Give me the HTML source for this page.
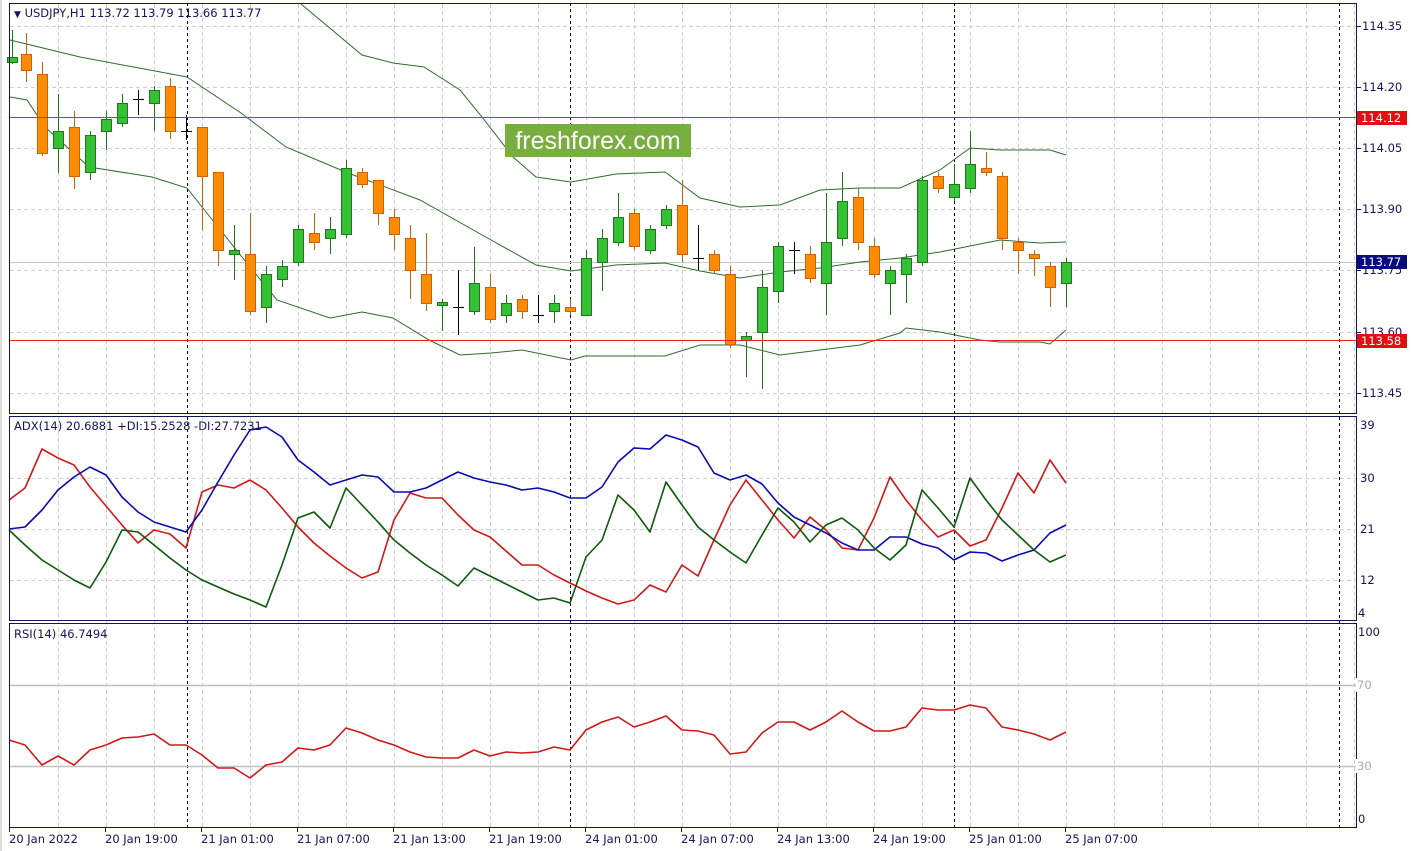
<!DOCTYPE html>
<html><head><meta charset="utf-8"><style>
html,body{margin:0;padding:0;background:#fff;width:1415px;height:851px;overflow:hidden}
svg{display:block}
text{font-family:"DejaVu Sans","Liberation Sans",sans-serif;font-size:11.5px;fill:#14145a}
</style></head><body>
<svg id="s" width="1415" height="851" viewBox="0 0 1415 851">
<rect x="0" y="0" width="1415" height="851" fill="#fff"/>
<g id="grid" stroke="#d0d0d0" stroke-dasharray="4,3" stroke-width="1"></g>
<g stroke="#000" stroke-dasharray="3,3" stroke-width="1">
<line x1="187.5" y1="3" x2="187.5" y2="827"/><line x1="570.5" y1="3" x2="570.5" y2="827"/>
<line x1="954.5" y1="3" x2="954.5" y2="827"/><line x1="1339.5" y1="3" x2="1339.5" y2="827"/>
</g>
<line x1="9" y1="262.5" x2="1356" y2="262.5" stroke="#c8c8c8"/>
<line x1="9" y1="685.5" x2="1356" y2="685.5" stroke="#c0c0c0" stroke-width="1.5"/>
<line x1="9" y1="766.5" x2="1356" y2="766.5" stroke="#c0c0c0" stroke-width="1.5"/>
<g fill="none" stroke="#2e6b2e" stroke-width="1">
<polyline points="301,4 362,55 393,63 424,67 460,90 482,117 513,157 536,177 571,182 616,174 665,172 700,198 740,207 780,205 820,190 860,188 900,188 940,170 970,148 1000,150 1050,150 1066,155"/>
<polyline points="10,40 80,57 187,77 241,113 286,147 348,173 420,200 491,240 536,265 571,271 616,265 665,263 700,271 740,278 780,272 820,268 860,262 900,258 940,252 980,244 1000,240 1040,243 1066,242"/>
<polyline points="10,97 27,100 45,127 89,167 152,177 187,188 210,217 250,267 277,300 330,318 362,312 393,318 429,340 460,355 491,353 522,350 571,360 585,356 665,356 700,345 740,345 780,355 820,350 860,345 900,333 906,328 940,332 980,340 1000,342 1040,342 1050,344 1066,330"/>
</g>
<g id="candles"></g>
<rect x="10" y="117" width="1346" height="1" fill="#ff2020"/>
<rect x="10" y="340" width="1346" height="1" fill="#e82020"/>
<rect x="505" y="124" width="186" height="33" fill="#78ae3e"/>
<text x="598" y="149" text-anchor="middle" style="font-family:'Liberation Sans',sans-serif;font-size:25px;fill:#fff">freshforex.com</text>
<g fill="none" stroke-width="1.6" stroke-linejoin="round">
<polyline stroke="#d01818" points="9,500 25,488 42,449 58,458 74,465 90,487 106,506 122,525 138,543 154,530 170,534 186,548 202,492 218,485 234,488 250,480 266,490 282,508 298,527 314,543 330,556 346,568 362,578 378,572 394,520 410,493 426,498 442,498 458,515 474,530 490,537 506,551 522,565 538,565 554,575 570,583 586,591 602,598 618,604 634,600 650,585 666,592 682,565 698,576 714,540 730,505 746,480 762,500 778,520 794,538 810,517 826,530 842,548 858,550 874,518 890,477 906,500 922,520 938,537 954,530 970,546 986,540 1002,508 1018,473 1034,493 1050,460 1066,483"/>
<polyline stroke="#0a0ab0" points="9,529 25,527 42,510 58,490 74,477 90,467 106,475 122,497 138,512 154,522 170,527 186,532 202,510 218,482 234,455 250,430 266,427 282,437 298,460 314,472 330,485 346,480 362,475 378,477 394,492 410,492 426,488 442,480 458,472 474,478 490,482 506,485 522,490 538,488 554,492 570,498 586,498 602,487 618,462 634,448 650,449 666,435 682,440 698,447 714,473 730,480 746,475 762,484 778,503 794,517 810,525 826,533 842,543 858,550 874,550 890,537 906,537 922,544 938,548 954,560 970,552 986,553 1002,561 1018,555 1034,550 1050,533 1066,525"/>
<polyline stroke="#0c5a0c" points="9,530 25,545 42,560 58,570 74,580 90,588 106,562 122,530 138,532 154,545 170,558 186,570 202,580 218,587 234,594 250,600 266,607 282,565 298,518 314,512 330,528 346,488 362,505 378,522 394,540 410,553 426,565 442,575 458,586 474,568 490,576 506,584 522,592 538,600 554,598 570,603 586,557 602,540 618,495 634,510 650,532 666,482 682,505 698,527 714,540 730,552 746,563 762,535 778,508 794,522 810,542 826,525 842,518 858,530 874,548 890,560 906,545 922,490 938,508 954,527 970,478 986,500 1002,520 1018,535 1034,550 1050,562 1066,555"/>
<polyline stroke="#d01818" points="9,740 25,745 42,765 58,756 74,765 90,750 106,745 122,738 138,737 154,734 170,745 186,745 202,755 218,768 234,768 250,778 266,765 282,762 298,748 314,750 330,745 346,728 362,733 378,740 394,745 410,752 426,757 442,758 458,758 474,750 490,756 506,752 522,753 538,752 554,747 570,750 586,730 602,722 618,717 634,727 650,722 666,716 682,730 698,731 714,735 730,754 746,752 762,733 778,722 794,722 810,730 826,722 842,711 858,722 874,731 890,731 906,727 922,708 938,710 954,710 970,705 986,708 1002,727 1018,730 1034,734 1050,740 1066,732"/>
</g>
<g fill="none" stroke="#14145a" stroke-width="1">
<rect x="9.5" y="3.5" width="1347" height="410"/>
<rect x="9.5" y="416.5" width="1347" height="204"/>
<rect x="9.5" y="623.5" width="1347" height="204"/>
</g>
<line x1="1" y1="0" x2="1" y2="851" stroke="#bbb"/>
<g id="ticks" stroke="#14145a"></g>
<text x="14" y="17"><tspan style="font-size:9px">▼</tspan> USDJPY,H1  113.72 113.79 113.66 113.77</text>
<text x="14" y="430">ADX(14) 20.6881 +DI:15.2528 -DI:27.7231</text>
<text x="14" y="638">RSI(14) 46.7494</text>
<g>
<text x="1362" y="30">114.35</text><text x="1362" y="91">114.20</text><text x="1362" y="152">114.05</text>
<text x="1362" y="213">113.90</text><text x="1362" y="274">113.75</text><text x="1362" y="336">113.60</text><text x="1362" y="397">113.45</text>
</g>
<rect x="1357" y="111" width="50" height="14" fill="#e01010"/><text x="1361" y="122" style="fill:#fff">114.12</text>
<rect x="1357" y="255" width="50" height="14" fill="#0a0a80"/><text x="1361" y="266" style="fill:#fff">113.77</text>
<rect x="1357" y="334" width="50" height="14" fill="#e01010"/><text x="1361" y="345" style="fill:#fff">113.58</text>
<text x="1360" y="429">39</text><text x="1360" y="482">30</text><text x="1360" y="533">21</text><text x="1360" y="584">12</text><text x="1358" y="617">4</text>
<text x="1358" y="636">100</text><text x="1358" y="823">0</text>
<rect x="1356" y="678" width="18" height="14" fill="#fff"/><text x="1357" y="689" style="fill:#aaa">70</text>
<rect x="1356" y="759" width="18" height="14" fill="#fff"/><text x="1357" y="770" style="fill:#aaa">30</text>
<g>
<text x="9" y="843">20 Jan 2022</text><text x="105" y="843">20 Jan 19:00</text><text x="201" y="843">21 Jan 01:00</text>
<text x="297" y="843">21 Jan 07:00</text><text x="393" y="843">21 Jan 13:00</text><text x="489" y="843">21 Jan 19:00</text>
<text x="585" y="843">24 Jan 01:00</text><text x="681" y="843">24 Jan 07:00</text><text x="777" y="843">24 Jan 13:00</text>
<text x="873" y="843">24 Jan 19:00</text><text x="969" y="843">25 Jan 01:00</text><text x="1065" y="843">25 Jan 07:00</text>
</g>
</svg>
<script>
var NS="http://www.w3.org/2000/svg";
function el(p,t,a){var e=document.createElementNS(NS,t);for(var k in a)e.setAttribute(k,a[k]);p.appendChild(e);return e;}
var g=document.getElementById("grid");
[26,87,148,209,270,332,393,478,529,580].forEach(function(y){el(g,"line",{x1:10,x2:1356,y1:y+.5,y2:y+.5});});
for(var x=58;x<1356;x+=48){el(g,"line",{x1:x+.5,x2:x+.5,y1:4,y2:827});}
var t=document.getElementById("ticks");
for(var x=9;x<=1070;x+=96){el(t,"line",{x1:x+.5,x2:x+.5,y1:827,y2:832});}
[26,87,148,209,270,332,393].forEach(function(y){el(t,"line",{x1:1356,x2:1361,y1:y+.5,y2:y+.5});});
var C=[[12,62,57,30,64],[26,54,70,33,82],[42,74,153,62,156],[58,148,131,94,173],[74,127,176,111,189],[90,172,135,131,180],[106,131,119,111,150],[122,123,103,94,127],[138,99,99,90,115],[154,103,90,86,131],[170,86,131,78,139],[186,131,131,115,140],[202,127,176,127,230],[218,172,250,172,266],[234,254,250,225,280],[250,254,311,213,315],[266,307,274,266,323],[282,279,266,260,287],[298,262,229,225,266],[314,233,242,213,250],[330,238,229,217,254],[346,234,168,160,238],[362,172,184,168,188],[378,180,213,180,225],[394,217,234,209,250],[410,238,270,225,299],[426,274,303,233,311],[442,305,302,299,331],[458,307,307,270,335],[474,311,283,247,315],[490,287,319,274,323],[506,315,303,295,323],[522,299,311,295,319],[538,315,315,295,323],[554,311,303,295,323],[570,307,311,299,315],[586,315,258,250,315],[602,262,238,229,291],[618,242,217,193,246],[634,213,246,209,250],[650,250,229,225,254],[666,225,209,205,229],[682,205,254,180,262],[698,258,258,225,270],[714,254,270,250,274],[730,274,344,266,348],[746,340,336,332,377],[762,332,287,270,389],[778,291,246,242,303],[794,250,250,242,274],[810,254,278,246,283],[826,283,242,193,315],[842,238,201,172,246],[858,197,242,188,250],[874,246,274,238,278],[890,283,270,266,315],[906,274,258,254,303],[922,262,180,176,266],[938,176,188,172,193],[954,197,184,164,201],[970,188,164,131,193],[986,168,172,152,176],[1002,176,238,172,250],[1018,242,250,238,274],[1034,254,258,250,276],[1050,266,287,262,307],[1066,283,262,258,307]];
var cg=document.getElementById("candles");
C.forEach(function(c){var x=c[0],o=c[1],cl=c[2],h=c[3],l=c[4];
 if(o==cl){el(cg,"line",{x1:x+.5,x2:x+.5,y1:h,y2:l,stroke:"#000"});el(cg,"line",{x1:x-5,x2:x+6,y1:o+.5,y2:o+.5,stroke:"#000"});return;}
 var up=cl<o,col=up?"#33c033":"#ff8c00",st=up?"#1a7a1a":"#d06000";
 el(cg,"line",{x1:x+.5,x2:x+.5,y1:h,y2:l,stroke:st});
 var top=Math.min(o,cl),bt=Math.max(o,cl);
 el(cg,"rect",{x:x-4.5,y:top+.5,width:10,height:Math.max(bt-top,1),fill:col,stroke:st});
});
</script>
</body></html>
